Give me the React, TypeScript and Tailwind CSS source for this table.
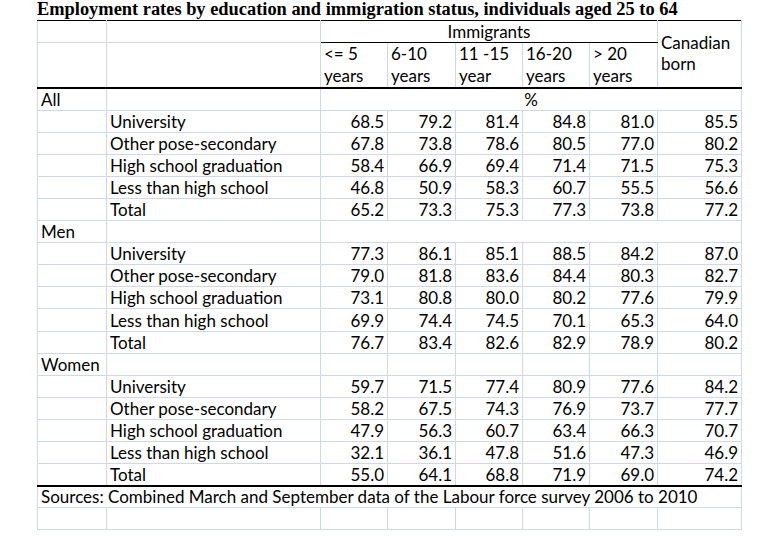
import React from "react";

type Row = [string, string, string, string, string, string, string];

interface Group {
    label: string;
    merged: boolean;
    note?: string;
    rows: Row[];
}

const groups: Group[] = [
    {
        label: "All",
        merged: true,
        note: "%",
        rows: [
            ["University", "68.5", "79.2", "81.4", "84.8", "81.0", "85.5"],
            ["Other pose-secondary", "67.8", "73.8", "78.6", "80.5", "77.0", "80.2"],
            ["High school graduation", "58.4", "66.9", "69.4", "71.4", "71.5", "75.3"],
            ["Less than high school", "46.8", "50.9", "58.3", "60.7", "55.5", "56.6"],
            ["Total", "65.2", "73.3", "75.3", "77.3", "73.8", "77.2"],
        ],
    },
    {
        label: "Men",
        merged: true,
        rows: [
            ["University", "77.3", "86.1", "85.1", "88.5", "84.2", "87.0"],
            ["Other pose-secondary", "79.0", "81.8", "83.6", "84.4", "80.3", "82.7"],
            ["High school graduation", "73.1", "80.8", "80.0", "80.2", "77.6", "79.9"],
            ["Less than high school", "69.9", "74.4", "74.5", "70.1", "65.3", "64.0"],
            ["Total", "76.7", "83.4", "82.6", "82.9", "78.9", "80.2"],
        ],
    },
    {
        label: "Women",
        merged: false,
        rows: [
            ["University", "59.7", "71.5", "77.4", "80.9", "77.6", "84.2"],
            ["Other pose-secondary", "58.2", "67.5", "74.3", "76.9", "73.7", "77.7"],
            ["High school graduation", "47.9", "56.3", "60.7", "63.4", "66.3", "70.7"],
            ["Less than high school", "32.1", "36.1", "47.8", "51.6", "47.3", "46.9"],
            ["Total", "55.0", "64.1", "68.8", "71.9", "69.0", "74.2"],
        ],
    },
];

const periods: [string, string][] = [
    ["<= 5", "years"],
    ["6-10", "years"],
    ["11 -15", "year"],
    ["16-20", "years"],
    ["> 20", "years"],
];

const widths = [69, 214, 67, 68, 67, 67, 68, 84];

// celda base: borde de cuadrícula gris como en Excel
const cell = "border border-[#d0d7e5] px-[3px] align-bottom whitespace-nowrap overflow-visible";

export default function App() {
    return (
        <div className="w-[767px] h-[537px] bg-white pl-[37px] overflow-hidden text-black" style={{ fontFamily: "Lato, 'Noto Sans', sans-serif" }}>
            <h1 className="h-[20px] text-[18.4px] leading-[18px] font-bold whitespace-nowrap" style={{ fontFamily: "'Liberation Serif', 'Times New Roman', serif" }}>
                Employment rates by education and immigration status, individuals aged 25 to 64
            </h1>

            <table className="table-fixed border-collapse w-[704px] text-[17px] leading-[20px]">
                <colgroup>
                    {widths.map((w, i) => (
                        <col key={i} style={{ width: w }} />
                    ))}
                </colgroup>
                <thead>
                    <tr className="h-[22px]">
                        <td className={`${cell} border-t-black`} />
                        <td className={`${cell} border-t-black`} />
                        <td colSpan={5} className={`${cell} border-t-black border-b-black text-center align-middle`}>
                            Immigrants
                        </td>
                        <td rowSpan={2} className={`${cell} border-t-black border-b-2 border-b-black align-middle leading-[21px] whitespace-normal pb-[3px]`}>
                            Canadian<br />born
                        </td>
                    </tr>
                    <tr className="h-[44px]">
                        <td className={`${cell} border-b-2 border-b-black`} />
                        <td className={`${cell} border-b-2 border-b-black`} />
                        {periods.map(([a, b]) => (
                            <td key={a} className={`${cell} border-b-2 border-b-black align-top leading-[22px]`}>
                                {a}
                                <br />
                                {b}
                            </td>
                        ))}
                    </tr>
                </thead>
                <tbody>
                    {groups.map((g, gi) => (
                        <React.Fragment key={g.label}>
                            <tr className="h-[22.1px]">
                                <td className={cell}>{g.label}</td>
                                <td className={cell} />
                                {g.merged ? (
                                    <td colSpan={6} className={`${cell} text-center`}>
                                        {g.note}
                                    </td>
                                ) : (
                                    [0, 1, 2, 3, 4, 5].map((i) => <td key={i} className={cell} />)
                                )}
                            </tr>
                            {g.rows.map((r, ri) => {
                                const last = gi === groups.length - 1 && ri === g.rows.length - 1;
                                const edge = last ? "border-b-2 border-b-black" : "";
                                return (
                                    <tr key={r[0]} className="h-[22.1px]">
                                        <td className={`${cell} ${edge}`} />
                                        <td className={`${cell} ${edge}`}>{r[0]}</td>
                                        {r.slice(1).map((v, vi) => (
                                            <td key={vi} className={`${cell} ${edge} text-right`}>
                                                {v}
                                            </td>
                                        ))}
                                    </tr>
                                );
                            })}
                        </React.Fragment>
                    ))}
                    <tr className="h-[22.1px]">
                        <td colSpan={8} className={cell}>
                            Sources: Combined March and September data of the Labour force survey 2006 to 2010
                        </td>
                    </tr>
                    <tr className="h-[22.1px]">
                        {widths.map((_, i) => (
                            <td key={i} className={cell} />
                        ))}
                    </tr>
                </tbody>
            </table>
        </div>
    );
}
